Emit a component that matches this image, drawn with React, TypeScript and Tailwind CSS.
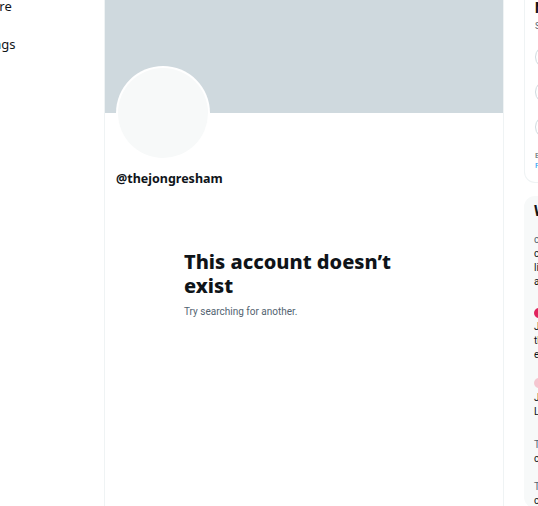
import React from "react";

const font = { fontFamily: 'Roboto, "Noto Sans", sans-serif' };
const noto = { fontFamily: '"Noto Sans", Roboto, sans-serif' };

function NavCol() {
  return (
    <div className="w-[104px] shrink-0 overflow-hidden relative text-[13px] text-[#0f1419]" style={noto}>
      <div className="ml-[-34px] mt-[-3px] flex flex-col gap-[20px] leading-[18px]">
        <div>Explore</div>
        <div>Settings</div>
      </div>
    </div>
  );
}

function MainCol() {
  return (
    <div className="w-[400px] shrink-0 border-x border-[#eff3f4] h-full flex flex-col">
      <div className="h-[113px] bg-[#cfd9de] shrink-0" />
      <div className="px-[11px] relative">
        <div className="-mt-[47px] w-[94px] h-[94px] rounded-full bg-white p-[2px]">
          <div className="w-full h-full rounded-full bg-[#f7f9f9]" />
        </div>
        <div className="mt-[11px] text-[12.5px] font-bold text-[#0f1419] leading-[16px]" style={noto}>
          @thejongresham
        </div>
      </div>
      <div className="w-[240px] mx-auto mt-[63px]">
        <div className="text-[20px] font-extrabold text-[#0f1419] leading-[24px]" style={noto}>
          This account doesn’t exist
        </div>
        <div className="mt-[8px] text-[10px] text-[#536471] leading-[12px]">Try searching for another.</div>
      </div>
    </div>
  );
}

function Sidebar() {
  return (
    <div className="pl-[20px] shrink-0 w-[260px] flex flex-col gap-[13px]">
      <div className="w-[240px] border border-[#eff3f4] border-t-0 rounded-b-[11px] px-[10px] pb-[11px] -mt-[10px] pt-[10px]">
        <div className="text-[14px] font-extrabold text-[#0f1419] leading-[18px] mt-[-1px]">New to Twitter?</div>
        <div className="text-[9px] text-[#536471] leading-[12px] mt-[3px]">
          Sign up now to get your own personalized timeline!
        </div>
        <div className="flex flex-col gap-[11px] mt-[13px]">
          <div className="h-[24px] rounded-full border border-[#cfd9de]" />
          <div className="h-[24px] rounded-full border border-[#cfd9de]" />
          <div className="h-[24px] rounded-full border border-[#cfd9de]" />
        </div>
        <div className="text-[8px] text-[#536471] leading-[10px] mt-[12px]">
          By signing up, you agree to the Terms of Service and
          <br />
          <span className="text-[#1d9bf0]">Privacy Policy</span>
        </div>
      </div>
      <div className="w-[240px] bg-[#f7f9f9] rounded-[11px] px-[10px] pt-[6px] h-[400px]">
        <div className="text-[14px] font-extrabold text-[#0f1419] leading-[18px]">What’s happening</div>
        <div className="mt-[13px] text-[10px] leading-[14px]">
          <div className="text-[#536471]">coming up · Trending</div>
          <div className="text-[#0f1419]">coverage of the event</div>
          <div className="text-[#0f1419]">live updates</div>
          <div className="text-[#0f1419]">and more</div>
        </div>
        <div className="mt-[19px] text-[10px] leading-[14px]">
          <div className="w-[10px] h-[10px] rounded-full bg-[#e0245e]" />
          <div className="text-[#0f1419] mt-[2px]">Just in</div>
          <div className="text-[#0f1419]">the latest story</div>
          <div className="text-[#0f1419]">everyone is talking</div>
        </div>
        <div className="mt-[16px] text-[10px] leading-[14px]">
          <div className="w-[10px] h-[10px] rounded-full bg-[#f4c6d0]" />
          <div className="text-[#0f1419] mt-[3px]">Join the</div>
          <div className="text-[#0f1419]">Live stream</div>
        </div>
        <div className="mt-[19px] text-[10px] leading-[14px]">
          <div className="text-[#536471]">Trending</div>
          <div className="text-[#0f1419]">conversation</div>
        </div>
        <div className="mt-[14px] text-[10px] leading-[14px]">
          <div className="text-[#536471]">Trending</div>
          <div className="text-[#0f1419]">coffee</div>
        </div>
      </div>
    </div>
  );
}

export default function App() {
  return (
    <div className="w-[538px] h-[506px] overflow-hidden bg-white flex" style={font}>
      <NavCol />
      <MainCol />
      <Sidebar />
    </div>
  );
}
